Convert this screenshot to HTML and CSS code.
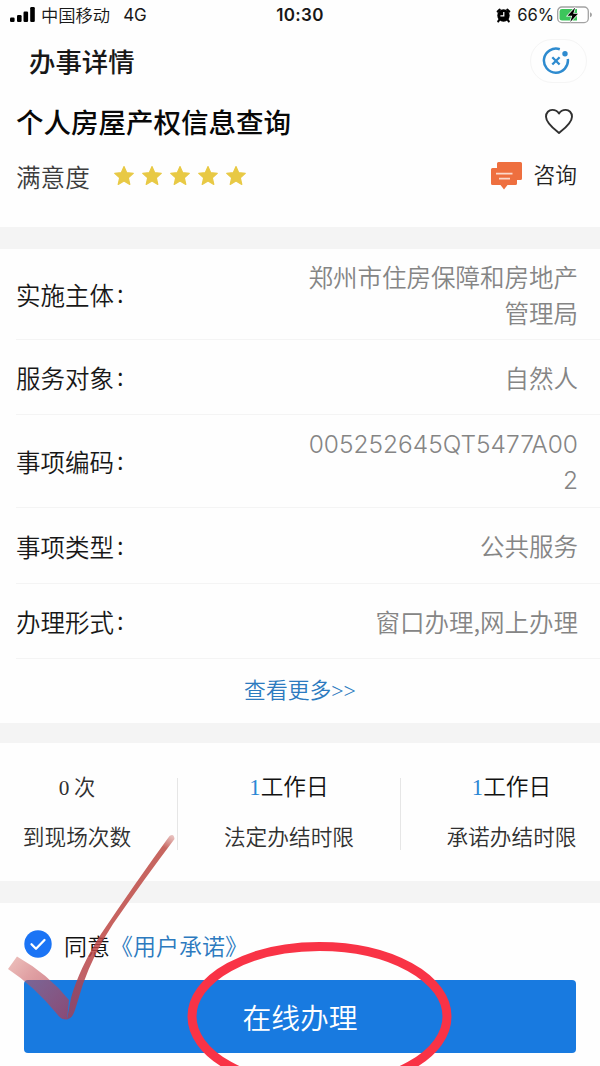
FILE: index.html
```html
<!DOCTYPE html>
<html lang="zh-CN">
<head>
<meta charset="utf-8">
<title>办事详情</title>
<link rel="stylesheet" href="styles.css">
</head>
<body>
<div class="screen">
  <div class="status">
    <div class="status-left">
      <svg class="signal" width="26" height="16" viewBox="0 0 26 16"><rect x="0" y="10.500" width="4.600" height="4.500" rx="1.200"/><rect x="7" y="8" width="4.600" height="7" rx="1.200"/><rect x="13.500" y="4.500" width="4.600" height="10.500" rx="1.200"/><rect x="20.200" y="0" width="4.600" height="15" rx="1.200"/></svg>
      <span class="carrier">中国移动</span><span class="latin">4G</span>
    </div>
    <div class="clock">10:30</div>
    <div class="status-right">
      <svg width="15" height="15" viewBox="0 0 16 16"><circle cx="8" cy="8" r="6.600"/><path d="M1.800 3.800 4 1.700M14.200 3.800 12 1.700M3.500 12.500 2.400 14.300M12.500 12.500 13.600 14.300" stroke="#000" stroke-width="2.200" stroke-linecap="round"/><path d="M8.300 4.300V8.300H4.700" fill="none" stroke="#fff" stroke-width="1.300"/></svg>
      <span class="latin percent">66%</span>
      <svg width="36" height="18" viewBox="0 0 36 18"><rect x=".7" y="1" width="30.600" height="15.600" rx="4.200" fill="#fff" stroke="#a2a2a2" stroke-width="1.300"/><path d="M5 3H20V14.600H5Q2.600 14.600 2.600 12.200V5.400Q2.600 3 5 3Z" fill="#3cc55b"/><path d="M33 6.300Q35 7 35 8.800T33 11.300Z" fill="#a2a2a2"/><path d="M18.200 1.500 10.500 9.800H15.200L13.200 16 21 7.800H16.200Z" fill="#000" stroke="#fff" stroke-width="1.400" paint-order="stroke"/></svg>
    </div>
  </div>
  <header class="nav">
    <h1>办事详情</h1>
    <div class="capsule"><svg width="28" height="28" viewBox="0 0 28 28" fill="none" stroke="#2e8bcf" stroke-width="2.500"><path d="M17.800 2.300A12 12 0 1 0 25.800 12"/><path d="M10.300 10.200 17.600 17.500M17.600 10.200 10.300 17.500" stroke-width="2.300"/><circle cx="23" cy="6.800" r="2.700" fill="#2e8bcf" stroke="none"/></svg></div>
  </header>
  <section class="summary">
    <div class="title-row">
      <h2>个人房屋产权信息查询</h2>
      <svg width="30" height="26" viewBox="0 0 30 26" fill="none" stroke="#303030" stroke-width="1.900" stroke-linejoin="round"><path d="M15 25C10 21 2 15 2 8.700C2 4.500 4.900 1.900 8.300 1.900C11.200 1.900 13.500 3.200 15 5.600C16.500 3.200 18.800 1.900 21.700 1.900C25.100 1.900 28 4.500 28 8.700C28 15 20 21 15 25Z"/></svg>
    </div>
    <div class="rating-row">
      <span class="rating-label">满意度</span>
      <svg class="stars" width="134" height="22" viewBox="0 0 134 22" fill="#e8c945" stroke="#e8c945" stroke-width="1.200" stroke-linejoin="round">
        <defs><path id="star" d="M11 1.500 13.700 7.700 20.300 8.300 15.300 12.700 16.800 19.400 11 16 5.200 19.400 6.700 12.700 1.700 8.300 8.300 7.700Z"/></defs>
        <use href="#star"/><use href="#star" x="28"/><use href="#star" x="56"/><use href="#star" x="84"/><use href="#star" x="112"/>
      </svg>
      <svg class="chat" width="34" height="30" viewBox="0 0 34 30"><path d="M8.500 1H30.500Q32 1 32 2.500V17.500Q32 19 30.500 19H27V22.500Q27 24 25.500 24H17.500L14 28.500 10.500 24H2.500Q1 24 1 22.500V8.500Q1 7 2.500 7H7V2.500Q7 1 8.500 1Z" fill="#ee6f3f"/><path d="M6 12.600H22.500M9 17.700H20" stroke="#fbd8ca" stroke-width="1.700"/></svg>
      <span class="ask">咨询</span>
    </div>
  </section>
  <section class="details">
    <div class="row double"><span>实施主体<i>:</i></span><p>郑州市住房保障和房地产<br>管理局</p></div>
    <div class="row"><span>服务对象<i>:</i></span><p>自然人</p></div>
    <div class="row double code-row"><span>事项编码<i>:</i></span><p class="code">005252645QT5477A00<br>2</p></div>
    <div class="row"><span>事项类型<i>:</i></span><p>公共服务</p></div>
    <div class="row"><span>办理形式<i>:</i></span><p>窗口办理,网上办理</p></div>
    <div class="more">查看更多<b>&gt;&gt;</b></div>
  </section>
  <section class="stats">
    <div class="stat first"><div class="value plain"><b>0</b> 次</div><div>到现场次数</div></div>
    <div class="stat"><div class="value"><b>1</b>工作日</div><div>法定办结时限</div></div>
    <div class="stat last"><div class="value"><b>1</b>工作日</div><div>承诺办结时限</div></div>
  </section>
  <section class="action">
    <div class="agree">
      <svg width="28" height="28" viewBox="0 0 28 28"><circle cx="14" cy="14" r="13.700" fill="#1b74f5"/><path d="M7.500 14.200 12 18.700 20.500 10" fill="none" stroke="#fff" stroke-width="2.300" stroke-linecap="round" stroke-linejoin="round"/></svg>
      <span>同意</span><a>《用户承诺》</a>
    </div>
    <div class="submit">在线办理</div>
  </section>
  <svg class="marks" width="600" height="1066" viewBox="0 0 600 1066">
    <defs>
      <linearGradient id="down" gradientUnits="userSpaceOnUse" x1="10" y1="960" x2="68" y2="1015"><stop offset="0" stop-color="#d05d55" stop-opacity=".4"/><stop offset=".3" stop-color="#c8555a" stop-opacity=".55"/><stop offset="1" stop-color="#ae3c55" stop-opacity=".75"/></linearGradient>
      <linearGradient id="up" gradientUnits="userSpaceOnUse" x1="68" y1="1018" x2="172" y2="835"><stop offset="0" stop-color="#a63d52" stop-opacity=".8"/><stop offset=".35" stop-color="#bd4543" stop-opacity=".85"/><stop offset=".93" stop-color="#bd4b44" stop-opacity=".85"/><stop offset="1" stop-color="#c96c66" stop-opacity=".4"/></linearGradient>
    </defs>
    <path d="M17 956.500 8 969Q34 986 57 1014Q61 1020 67 1019.500L69 1000Q48 974 17 956.500Z" fill="url(#down)"/>
    <path d="M169.500 836Q136 882 101 934Q79 969 71 998L67 1019.500Q72 1019 75 1010L83 984Q94 953 113 924Q145 878 174.500 839Q174 833 169.500 836Z" fill="url(#up)"/>
    <ellipse cx="319.500" cy="1016.500" rx="127.500" ry="70" fill="none" stroke="#f93346" stroke-width="9"/>
  </svg>
</div>
</body>
</html>
```
FILE: styles.css
```css
* { box-sizing: border-box; }
body { margin: 0; background: #fefefe; }
h1, h2, p { margin: 0; }
i, b { font-style: normal; font-weight: 400; }
svg { display: block; flex: none; }
.screen {
  position: relative;
  width: 600px;
  height: 1066px;
  overflow: hidden;
  background: #fefefe;
  color: #181818;
  font-family: "Noto Sans CJK SC", sans-serif;
  font-weight: 350;
  white-space: nowrap;
}
.latin, .clock, .code { font-family: Inter, "Liberation Sans", sans-serif; }
.status {
  display: grid;
  grid-template-columns: 1fr auto 1fr;
  align-items: center;
  height: 30px;
  padding: 0 7px 0 10px;
  font-size: 17px;
  line-height: 30px;
}
.status-left, .status-right { display: flex; align-items: center; }
.status-right { justify-content: flex-end; }
.status .latin { font-weight: 400; }
.carrier { margin: 0 13px 0 5px; font-size: 17.3px; }
.clock { margin-right: 3px; font-size: 17px; font-weight: 600; letter-spacing: .3px; }
.status .percent { margin: 0 3px 0 6px; font-size: 16.6px; }
.nav { display: flex; justify-content: space-between; align-items: center; height: 62px; padding: 0 13px 0 29px; }
.nav h1 { font-size: 26.4px; font-weight: 500; line-height: 58px; }
.capsule { display: grid; place-items: center; width: 57px; height: 44px; padding-right: 5px; border: 1px solid #f5f5f5; border-radius: 22px; }
.summary { height: 135px; }
.title-row { display: flex; justify-content: space-between; align-items: center; height: 58px; padding: 0 26px 0 16px; color: #080808; }
.title-row h2 { font-size: 27.5px; font-weight: 500; line-height: 58px; }
.rating-row { display: flex; align-items: center; height: 52px; padding: 0 23px 0 16px; }
.rating-label { width: 97px; font-size: 24.6px; color: #3c3c3c; }
.chat { margin-left: auto; }
.ask { margin-left: 10px; font-size: 21.7px; line-height: 46px; padding-bottom: 4px; color: #222; }
.details { border-top: 22px solid #f4f4f4; font-size: 24.5px; }
.row {
  display: flex;
  justify-content: space-between;
  align-items: center;
  height: 75.5px;
  margin-left: 16px;
  padding: 1.5px 22px 0 0;
  border-bottom: 1.5px solid #f4f4f4;
}
.row i { margin-left: 3px; position: relative; top: -2px; font-weight: 350; }
.row p { color: #858585; text-align: right; line-height: 36px; }
.row.double { height: 90.5px; }
.row.code-row { height: 93px; }
.row .code { font-size: 24.5px; font-weight: 350; }
.more { height: 64px; line-height: 60px; text-align: center; font-size: 21.8px; color: #2c7abf; }
.more b { font-family: "Liberation Serif", serif; }
.stats {
  display: grid;
  grid-template-columns: 178px 223px 199px;
  height: 180px;
  padding: 35px 0 31px;
  border: solid #f4f4f4;
  border-width: 20px 0 22px;
  font-size: 21.7px;
  color: #303030;
}
.stat { border-right: 1.5px solid #e6e6e6; text-align: center; line-height: 28px; }
.stat.first { padding-right: 23px; }
.stat.last { border: 0; padding-left: 22px; }
.value { height: 44px; line-height: 16px; font-size: 22.7px; color: #111; }
.value.plain { font-size: 21.3px; color: #303030; }
.value b { font-family: "Liberation Serif", serif; color: #2b86d4; }
.value.plain b { color: #303030; }
.action { padding: 20px 24px 0; }
.agree { display: flex; align-items: center; height: 44px; font-size: 23px; color: #111; }
.agree svg { margin-bottom: 2px; }
.agree span { margin-left: 12px; }
.agree a { color: #2c7abf; }
.submit {
  height: 73.5px;
  margin-top: 12.5px;
  border-radius: 4px;
  background: #187ae0;
  color: #fff;
  text-align: center;
  font-size: 28.8px;
  line-height: 73px;
}
.marks { position: absolute; left: 0; top: 0; }
```
